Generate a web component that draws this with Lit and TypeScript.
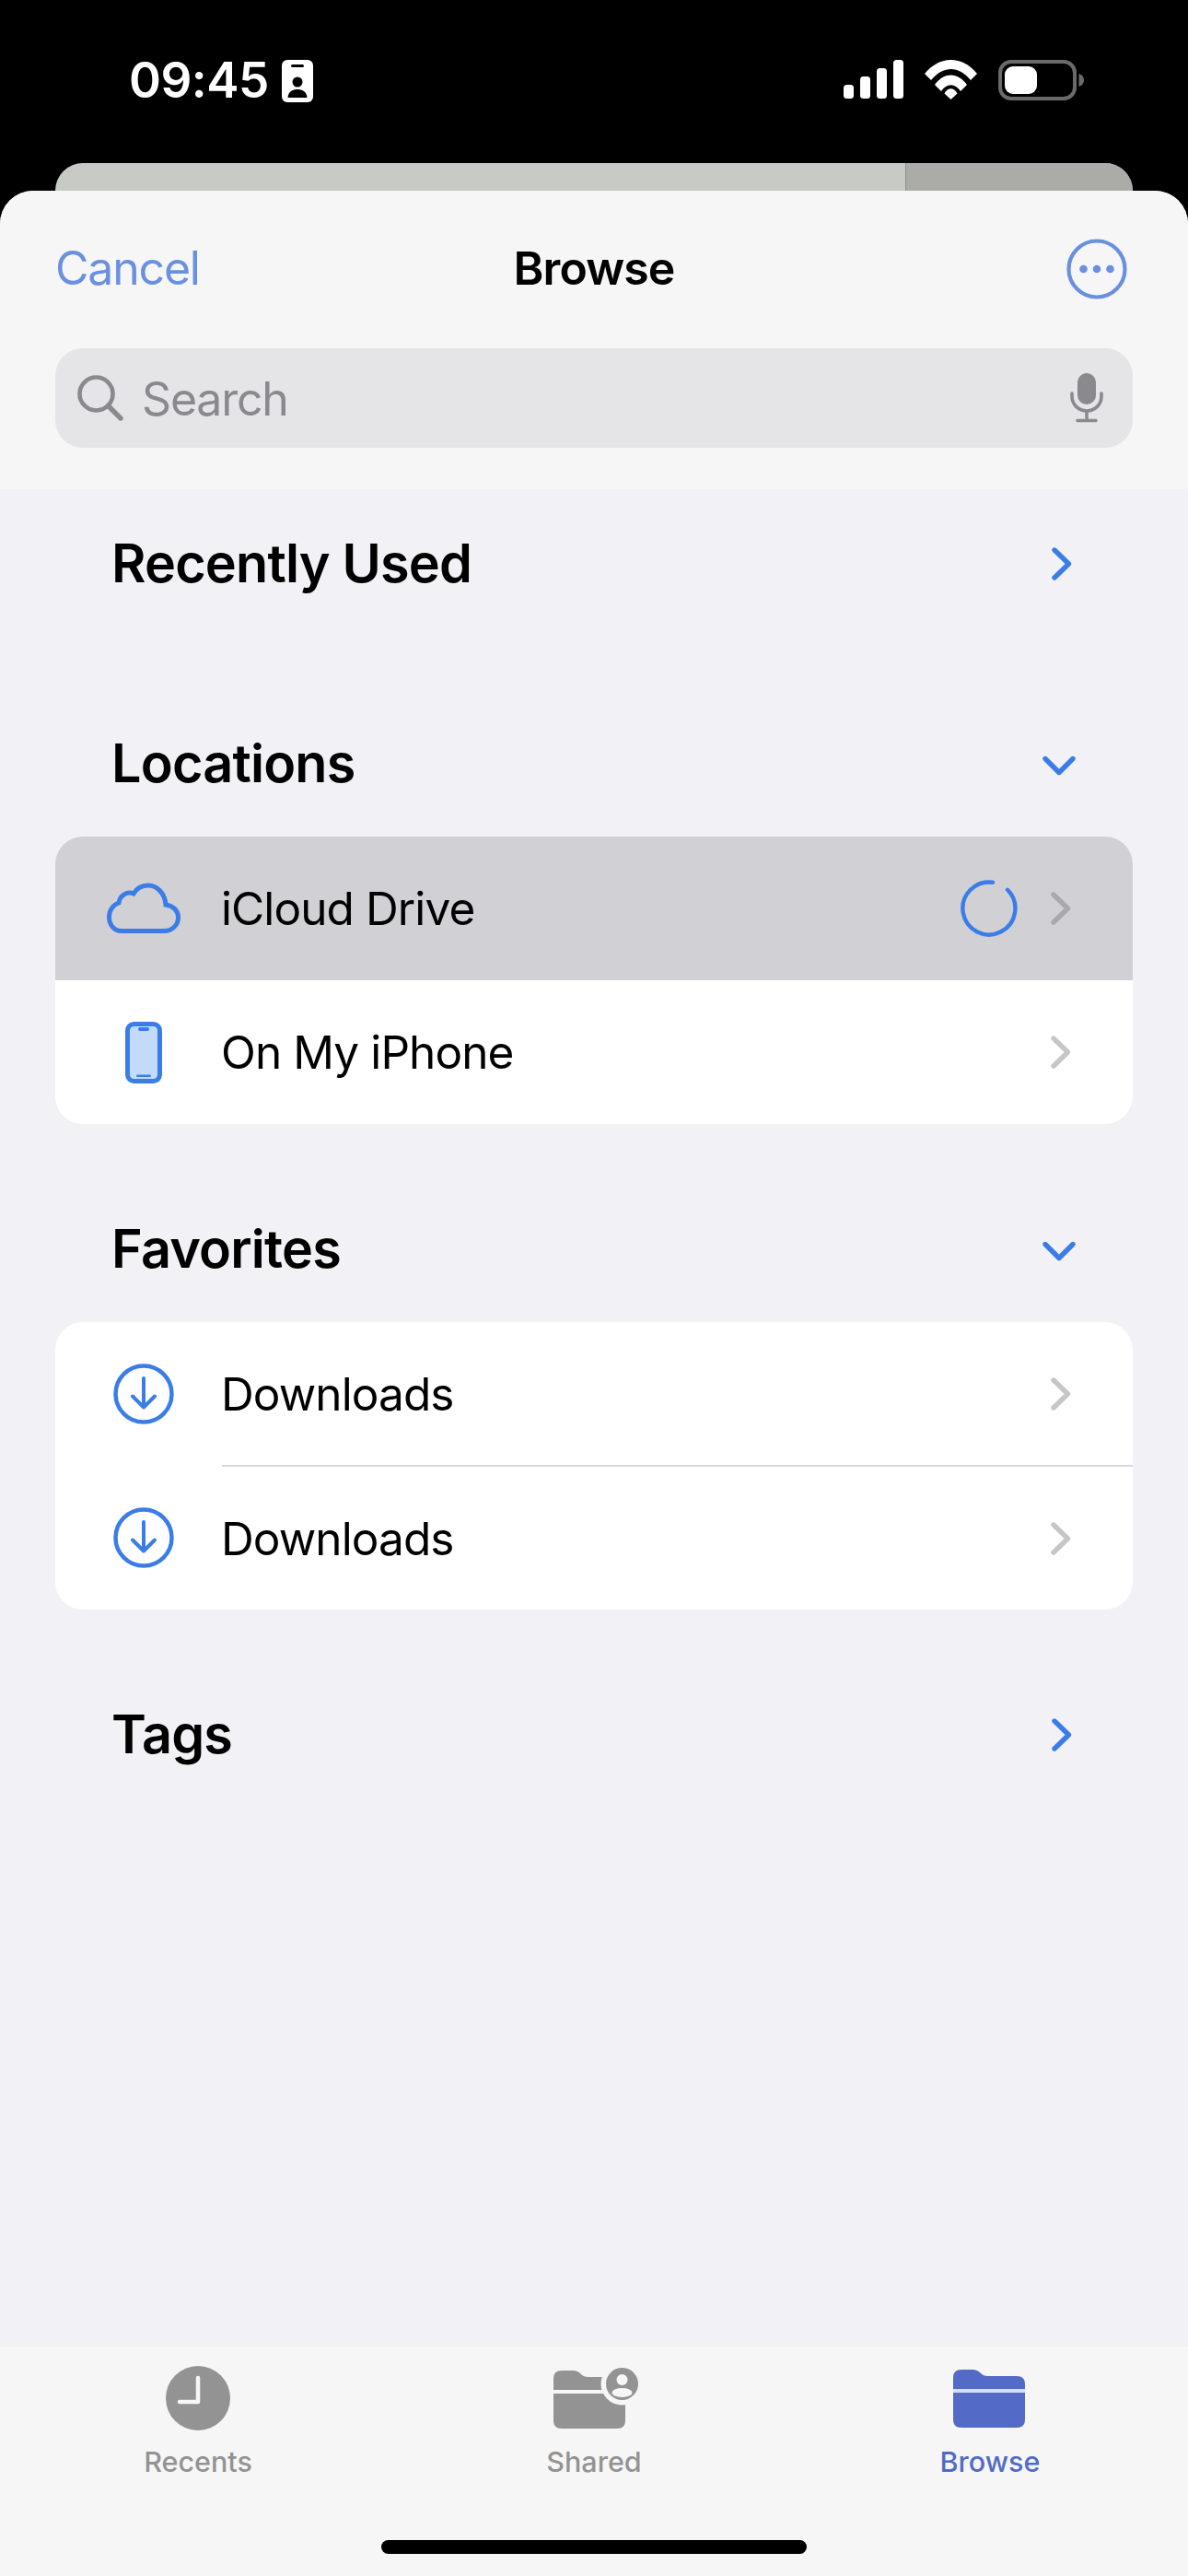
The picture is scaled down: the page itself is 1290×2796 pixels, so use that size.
import { LitElement, html, css, svg } from "lit";
import { customElement } from "lit/decorators.js";

const chevron = (cls: string) => html`<svg class="chev ${cls}" width="24" height="38" viewBox="0 0 24 38"><path d="M4 4 L19.5 19 L4 34" fill="none" stroke="currentColor" stroke-width="5.4" stroke-linecap="round" stroke-linejoin="round"/></svg>`;
const chevDown = html`<svg class="chevdown" width="38" height="24" viewBox="0 0 38 24"><path d="M4 4.5 L19 19.5 L34 4.5" fill="none" stroke="currentColor" stroke-width="5.4" stroke-linecap="round" stroke-linejoin="round"/></svg>`;
const cloud = html`<svg width="80" height="56" viewBox="0 0 80 56"><path d="M16 52.5 H62 C71 52.5 77.5 46 77.5 38 C77.5 30 71.5 25 64 24 C63 12 55 3 45 3 C38 3 32.500 6 29 12 C22 9 14 14 13 22 C7 24 2.500 30 2.500 37 C2.500 46 8 52.500 16 52.500Z" fill="none" stroke="#3b7de8" stroke-width="5"/></svg>`;
const phone = html`<svg width="40" height="67" viewBox="0 0 40 67"><rect x="2.500" y="2.500" width="35" height="62" rx="7" fill="#c3dafa" stroke="#3b7de8" stroke-width="5"/><rect x="14" y="6" width="12" height="4" rx="2" fill="#3b7de8"/><rect x="12" y="57.500" width="16" height="2.500" rx="1.200" fill="#3b7de8"/></svg>`;
const download = html`<svg width="66" height="66" viewBox="0 0 66 66"><circle cx="33" cy="33" r="30.500" fill="none" stroke="#3b7de8" stroke-width="4.500"/><path d="M33 16 V47 M21 35.500 L33 47.500 L45 35.500" fill="none" stroke="#3b7de8" stroke-width="4" stroke-linecap="round" stroke-linejoin="round"/></svg>`;
const spinner = html`<svg width="62" height="62" viewBox="0 0 62 62"><path d="M35 2.800 A28.500 28.500 0 1 0 51 10.800" fill="none" stroke="#3b7de8" stroke-width="4.400" stroke-linecap="round"/></svg>`;
const folderPath = svg`<path d="M0 9 C0 3 3 0 9 0 H20 C25 0 27 1 30 4 C32 6 34 7 38 7 H69 C75 7 78 10 78 16 V54 C78 60 75 63 69 63 H9 C3 63 0 60 0 54Z"/>`;

const rows = {
  locations: [
    { icon: cloud, label: "iCloud Drive", active: true },
    { icon: phone, label: "On My iPhone" },
  ],
  favorites: [
    { icon: download, label: "Downloads" },
    { icon: download, label: "Downloads" },
  ],
};

@customElement("app-root")
export class AppRoot extends LitElement {
  static styles = css`
    :host { display: block; width: 1290px; height: 2796px; overflow: hidden; font-family: Inter, "Liberation Sans", sans-serif; }
    .app { width: 1290px; height: 2796px; background: #000; display: flex; flex-direction: column; }
    .status { height: 177px; flex: none; display: flex; align-items: flex-start; color: #fff; padding: 65px 113px 0 140px; box-sizing: border-box; }
    .time { font-size: 53px; font-weight: 600; line-height: 44px; letter-spacing: -0.5px; }
    .idbadge { margin-left: 14px; }
    .status-right { margin-left: auto; display: flex; gap: 23px; align-items: flex-start; }
    .behind { height: 30px; flex: none; margin: 0 60px; border-radius: 30px 30px 0 0; overflow: hidden; display: flex; background: #c8cac6; }
    .behind-right { margin-left: auto; width: 246px; background: #abaca8; border-left: 1px solid #8e8f8c; }
    .sheet { flex: 1; display: flex; flex-direction: column; border-radius: 36px 36px 0 0; overflow: hidden; background: #f1f1f6; }
    .head { height: 324px; flex: none; background: #f6f6f6; box-sizing: border-box; padding: 52px 60px 0; display: flex; flex-direction: column; }
    .nav { height: 66px; display: flex; align-items: center; justify-content: space-between; position: relative; padding-right: 6px; }
    .cancel { font-size: 50px; color: #6a90e0; letter-spacing: -1.2px; line-height: 60px; padding-bottom: 2px; }
    .title { position: absolute; left: 0; right: 0; text-align: center; font-size: 50px; line-height: 60px; padding-bottom: 3px; font-weight: 600; color: #000; letter-spacing: -0.9px; }
    .search { margin-top: 53px; height: 108px; border-radius: 30px; background: #e5e5e8; display: flex; align-items: center; padding: 0 32px 0 24px; }
    .search-text { font-size: 50px; color: #8a8a8e; margin-left: 20px; letter-spacing: -1.2px; padding-top: 2px; }
    .mic { margin-left: auto; }
    .body { flex: 1; padding: 0 60px; }
    .sec { height: 80px; display: flex; align-items: center; justify-content: space-between; padding: 0 65px 0 61px; font-size: 57.5px; font-weight: 600; color: #000; letter-spacing: -0.8px; }
    .sec span { padding-bottom: 3px; }
    .sec.first { margin-top: 41px; }
    .sec.loc { margin-top: 137px; }
    .sec.fav, .sec.tags { margin-top: 96px; }
    .sec svg { color: #3b7de8; }
    .chevdown { margin-right: -4px; margin-top: 3px; }
    .card { margin-top: 39px; background: #fff; border-radius: 30px; overflow: hidden; }
    .row { height: 156px; display: flex; align-items: stretch; }
    .row.active { background: #d0d0d5; }
    .ico { width: 100px; margin-left: 46px; display: flex; align-items: center; justify-content: center; flex: none; }
    .content { flex: 1; margin-left: 35px; display: flex; align-items: center; padding-right: 66px; font-size: 49.5px; color: #000; letter-spacing: -0.9px; }
    .content > span:first-child { margin-left: -1px; }
    .row:not(.active) + .row .content { border-top: 2px solid #d8d8da; margin-top: -1px; }
    .spin { margin-left: auto; margin-right: 35px; display: flex; }
    .content .chev { margin-left: auto; color: #c6c6c8; }
    .spin + .chev { margin-left: 0; color: #a9a9ad; }
    .tabbar { height: 249px; flex: none; background: #f6f6f6; display: grid; grid-template-columns: repeat(3, 1fr); position: relative; }
    .tab { display: flex; flex-direction: column; align-items: center; padding-top: 21px; color: #939393; font-size: 30.5px; font-weight: 500; }
    .tab.on { color: #536bc7; }
    .tab-ico { height: 70px; display: flex; align-items: center; }
    .tab-label { margin-top: 16px; line-height: 36px; }
    .shared-ico { margin-left: 3px; }
    .browse-ico { margin-right: 2px; }
    .home { position: absolute; left: 414px; width: 462px; height: 15px; bottom: 24px; border-radius: 8px; background: #000; }
  `;

  private statusIcons() {
    return html`
      <svg width="65" height="42" viewBox="0 0 65 42" fill="#fff"><rect x="0" y="27" width="11" height="15" rx="3.500"/><rect x="18" y="18" width="11" height="24" rx="3.500"/><rect x="36" y="9" width="11" height="33" rx="3.500"/><rect x="54" y="0" width="11" height="42" rx="3.500"/></svg>
      <svg width="57" height="43" viewBox="0 0 57 43" fill="#fff"><path d="M0 15 C16 -5 41 -5 57 15 L50 22 C37 6 20 6 7 22Z"/><path d="M11 27 C21 13 36 13 46 27 L39 34 C33 25 24 25 18 34Z"/><path d="M21.500 36.500 C25 29.500 32 29.500 35.500 36.500 L28.500 43Z"/></svg>
      <svg width="93" height="44" viewBox="0 0 93 44"><rect x="2" y="2" width="81" height="40" rx="12" fill="none" stroke="#6a6a6a" stroke-width="4"/><rect x="7" y="7" width="35" height="30" rx="9" fill="#fff"/><path d="M87.500 15 C91 16 93 19 93 22 C93 25 91 28 87.500 29Z" fill="#6a6a6a"/></svg>`;
  }

  private renderRow(r: { icon: unknown; label: string; active?: boolean }) {
    return html`<div class="row ${r.active ? "active" : ""}">
      <div class="ico">${r.icon}</div>
      <div class="content">
        <span>${r.label}</span>
        ${r.active ? html`<span class="spin">${spinner}</span>` : ""}
        ${chevron("")}
      </div>
    </div>`;
  }

  render() {
    return html`<div class="app">
      <div class="status">
        <span class="time">09:45</span>
        <svg class="idbadge" width="34" height="46" viewBox="0 0 34 46"><rect width="34" height="46" rx="6" fill="#fff"/><rect x="10" y="5" width="14" height="3" rx="1.500" fill="#000"/><circle cx="17" cy="24" r="5.500" fill="#000"/><path d="M6.500 41 C7 34 12 32 17 32 C22 32 27 34 27.500 41Z" fill="#000"/></svg>
        <div class="status-right">${this.statusIcons()}</div>
      </div>
      <div class="behind"><div class="behind-right"></div></div>
      <div class="sheet">
        <div class="head">
          <div class="nav">
            <span class="cancel">Cancel</span>
            <span class="title">Browse</span>
            <svg width="66" height="66" viewBox="0 0 66 66"><circle cx="33" cy="33" r="30.500" fill="none" stroke="#6a90e0" stroke-width="4.200"/><circle cx="18.500" cy="33" r="4.300" fill="#6a90e0"/><circle cx="33" cy="33" r="4.300" fill="#6a90e0"/><circle cx="47.500" cy="33" r="4.300" fill="#6a90e0"/></svg>
          </div>
          <div class="search">
            <svg width="50" height="50" viewBox="0 0 50 50"><circle cx="20.500" cy="20.500" r="18" fill="none" stroke="#8a8a8e" stroke-width="4.600"/><path d="M33.500 33.500 L47 47" stroke="#8a8a8e" stroke-width="5.400" stroke-linecap="round"/></svg>
            <span class="search-text">Search</span>
            <svg class="mic" width="36" height="54" viewBox="0 0 36 54"><rect x="8" y="0" width="20" height="34" rx="10" fill="#8a8a8e"/><path d="M2 22 V25 C2 34 9 41 18 41 C27 41 34 34 34 25 V22 M18 41 V51 M8 51.500 H28" fill="none" stroke="#8a8a8e" stroke-width="3.600" stroke-linecap="round"/></svg>
          </div>
        </div>
        <div class="body">
          <div class="sec first"><span>Recently Used</span>${chevron("")}</div>
          <div class="sec loc"><span>Locations</span>${chevDown}</div>
          <div class="card">${rows.locations.map((r) => this.renderRow(r))}</div>
          <div class="sec fav"><span>Favorites</span>${chevDown}</div>
          <div class="card">${rows.favorites.map((r) => this.renderRow(r))}</div>
          <div class="sec tags"><span>Tags</span>${chevron("")}</div>
        </div>
        <div class="tabbar">
          <div class="tab">
            <div class="tab-ico"><svg width="70" height="70" viewBox="0 0 70 70"><circle cx="35" cy="35" r="35" fill="#939393"/><path d="M35 13 V39 H15" fill="none" stroke="#f6f6f6" stroke-width="4.500" stroke-linecap="round" stroke-linejoin="round"/></svg></div>
            <div class="tab-label">Recents</div>
          </div>
          <div class="tab">
            <div class="tab-ico"><svg class="shared-ico" width="92" height="66" viewBox="0 0 92 66"><g transform="translate(0 3)" fill="#939393">${folderPath}</g><rect y="24" width="78" height="4" fill="#f6f6f6"/><circle cx="74.500" cy="17.500" r="23" fill="#f6f6f6"/><circle cx="74.500" cy="17.500" r="17.500" fill="#939393"/><circle cx="74.500" cy="13" r="6" fill="#f6f6f6"/><ellipse cx="74.500" cy="27" rx="11" ry="5" fill="#f6f6f6"/></svg></div>
            <div class="tab-label">Shared</div>
          </div>
          <div class="tab on">
            <div class="tab-ico"><svg class="browse-ico" width="78" height="63" viewBox="0 0 78 63" fill="#536bc7">${folderPath}<rect y="21" width="78" height="4" fill="#d6def8"/></svg></div>
            <div class="tab-label">Browse</div>
          </div>
          <div class="home"></div>
        </div>
      </div>
    </div>`;
  }
}
